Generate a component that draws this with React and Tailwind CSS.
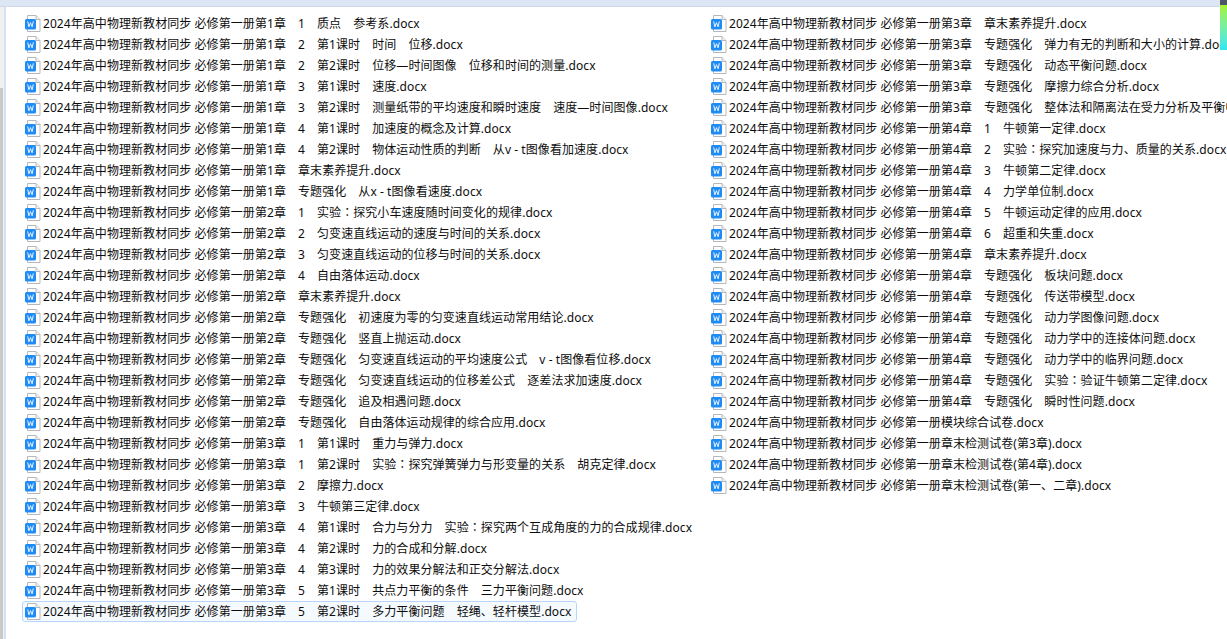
const prefix = '2024年高中物理新教材同步 必修第一册'

const leftFiles = [
  '第1章　1　质点　参考系',
  '第1章　2　第1课时　时间　位移',
  '第1章　2　第2课时　位移—时间图像　位移和时间的测量',
  '第1章　3　第1课时　速度',
  '第1章　3　第2课时　测量纸带的平均速度和瞬时速度　速度—时间图像',
  '第1章　4　第1课时　加速度的概念及计算',
  '第1章　4　第2课时　物体运动性质的判断　从v - t图像看加速度',
  '第1章　章末素养提升',
  '第1章　专题强化　从x - t图像看速度',
  '第2章　1　实验：探究小车速度随时间变化的规律',
  '第2章　2　匀变速直线运动的速度与时间的关系',
  '第2章　3　匀变速直线运动的位移与时间的关系',
  '第2章　4　自由落体运动',
  '第2章　章末素养提升',
  '第2章　专题强化　初速度为零的匀变速直线运动常用结论',
  '第2章　专题强化　竖直上抛运动',
  '第2章　专题强化　匀变速直线运动的平均速度公式　v - t图像看位移',
  '第2章　专题强化　匀变速直线运动的位移差公式　逐差法求加速度',
  '第2章　专题强化　追及相遇问题',
  '第2章　专题强化　自由落体运动规律的综合应用',
  '第3章　1　第1课时　重力与弹力',
  '第3章　1　第2课时　实验：探究弹簧弹力与形变量的关系　胡克定律',
  '第3章　2　摩擦力',
  '第3章　3　牛顿第三定律',
  '第3章　4　第1课时　合力与分力　实验：探究两个互成角度的力的合成规律',
  '第3章　4　第2课时　力的合成和分解',
  '第3章　4　第3课时　力的效果分解法和正交分解法',
  '第3章　5　第1课时　共点力平衡的条件　三力平衡问题',
  '第3章　5　第2课时　多力平衡问题　轻绳、轻杆模型',
]

const rightFiles = [
  '第3章　章末素养提升',
  '第3章　专题强化　弹力有无的判断和大小的计算',
  '第3章　专题强化　动态平衡问题',
  '第3章　专题强化　摩擦力综合分析',
  '第3章　专题强化　整体法和隔离法在受力分析及平衡中的应用',
  '第4章　1　牛顿第一定律',
  '第4章　2　实验：探究加速度与力、质量的关系',
  '第4章　3　牛顿第二定律',
  '第4章　4　力学单位制',
  '第4章　5　牛顿运动定律的应用',
  '第4章　6　超重和失重',
  '第4章　章末素养提升',
  '第4章　专题强化　板块问题',
  '第4章　专题强化　传送带模型',
  '第4章　专题强化　动力学图像问题',
  '第4章　专题强化　动力学中的连接体问题',
  '第4章　专题强化　动力学中的临界问题',
  '第4章　专题强化　实验：验证牛顿第二定律',
  '第4章　专题强化　瞬时性问题',
  '模块综合试卷',
  '章末检测试卷(第3章)',
  '章末检测试卷(第4章)',
  '章末检测试卷(第一、二章)',
]

function WordIcon() {
  return (
    <svg width="16" height="17" viewBox="0 0 16 17" className="shrink-0">
      <path d="M2.5 0.5H11L15 4.5V16.5H2.5Z" fill="#fff" stroke="#b4b8bd" />
      <path d="M11 0.5V4.5H15" fill="#eef0f2" stroke="#b4b8bd" />
      <rect x="0" y="4" width="11" height="10.5" rx="1.5" fill="#1f8bf5" />
      <path d="M2.7 6.4L3.9 11.8L5.5 7.6L7.1 11.8L8.3 6.4" fill="none" stroke="#e8f3ff" strokeWidth="1" />
    </svg>
  )
}

function FileRow({ name, selected }) {
  // the colon sits in the middle of its cell in the reference, as in the TC cut
  const [before, after] = name.split('：')
  return (
    <div
      className={`flex items-center gap-[2px] h-[21px] pl-[2px] pr-[5px] w-max rounded-[3px] border ${
        selected ? 'border-[#b8d6fb] bg-[#f5faff]' : 'border-transparent'
      }`}
    >
      <WordIcon />
      <span className="whitespace-nowrap text-[12px] leading-[19px] tracking-[0.065px] text-[#0d0d0d]">
        {prefix}
        {before}
        {after !== undefined && <span className="leading-none font-['Noto_Sans_CJK_TC',sans-serif]">：</span>}
        {after}.docx
      </span>
    </div>
  )
}

export default function App() {
  return (
    <div className="relative flex flex-col w-[1227px] h-[639px] overflow-hidden bg-white font-['Noto_Sans','Noto_Sans_CJK_SC',sans-serif]">
      <div className="h-[7px] shrink-0 bg-[#dce6f4] border-b border-[#cfd9e8]" />
      <div className="flex flex-1 min-h-0">
        <div className="w-[6px] shrink-0 flex flex-col bg-[#f0f0f0] border-r-2 border-[#d3e2f5]">
          <div className="h-[81px] shrink-0" />
          <div className="flex-1 w-[3px] bg-[#c9c9c9]" />
        </div>
        <div className="flex flex-1 min-w-0 pt-[6px] pl-[16px]">
          <div className="w-[686px] shrink-0">
            {leftFiles.map((name, i) => (
              <FileRow key={name} name={name} selected={i === leftFiles.length - 1} />
            ))}
          </div>
          <div className="flex-1 min-w-0 overflow-hidden">
            {rightFiles.map((name) => (
              <FileRow key={name} name={name} />
            ))}
          </div>
        </div>
      </div>
      {/* colored strip in the top right corner */}
      <div className="absolute top-0 right-0 w-[7px] h-[50px] bg-gradient-to-b from-[#4a5568] from-10% via-[#a4f21e] via-10% to-[#2fe6f0]" />
    </div>
  )
}
